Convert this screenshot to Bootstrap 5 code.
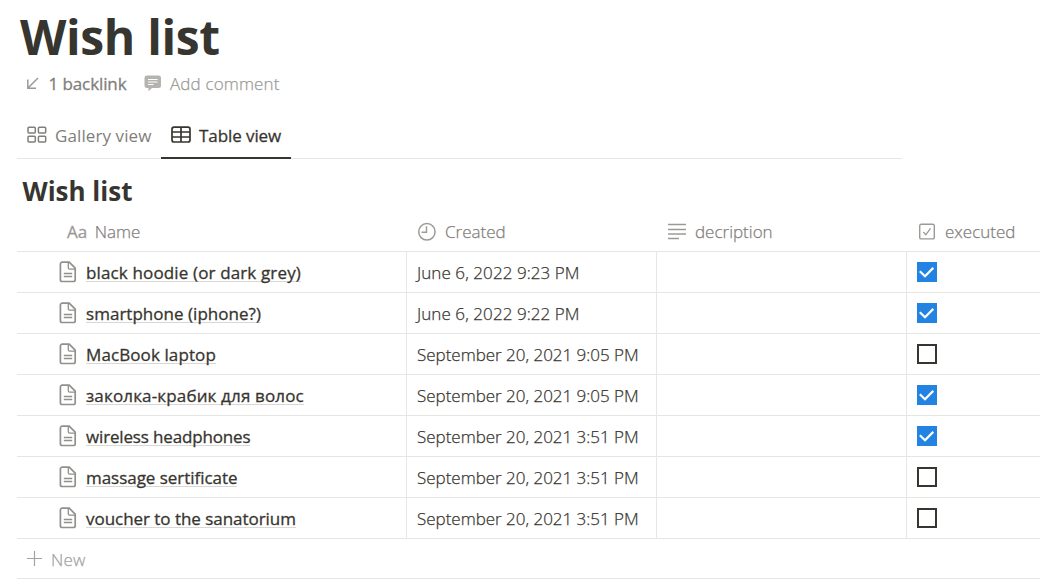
<!DOCTYPE html>
<html lang="en">
<head>
<meta charset="utf-8">
<meta name="viewport" content="width=device-width, initial-scale=1">
<title>Wish list</title>
<link href="https://cdn.jsdelivr.net/npm/bootstrap@5.3.0/dist/css/bootstrap.min.css" rel="stylesheet">
<style>
  body { font-family: "Open Sans", "Noto Sans", sans-serif; font-size: 17px; line-height: 24px; color: #37352f; background: #fff; overflow: hidden; height: 587px; }
  svg { display: block; flex: none; fill: none; stroke: currentColor; }
  .page-title { font-size: 48px; line-height: 60px; font-weight: 700; letter-spacing: -.35px; padding: 7px 0 0 20px; margin: 0; }
  .page-meta { height: 33px; padding-left: 26px; color: #9b9a97; }
  .backlink { margin-left: 9.5px; letter-spacing: -.1px; }
  .bubble { margin-left: 17px; }
  .add-comment { margin-left: 8.5px; letter-spacing: .14px; }
  .ink-soft { color: #7f7e7a; }
  .ink-faint { color: #9b9a97; }
  .medium { font-weight: 500; -webkit-text-stroke: .3px currentColor; }
  .thin { font-weight: 300; -webkit-text-stroke: .25px currentColor; }
  .views { width: 885px; height: 48px; margin: 11px 0 0 17px; border-bottom: 1px solid #e6e6e5; }
  .view-tab { height: 48px; padding: 1px 0 0 10px; border-bottom: 2px solid transparent; white-space: nowrap; }
  .view-tab.active { width: 130px; color: #37352f; border-color: #37352f; }
  .view-gallery { width: 144px; }
  .view-tab span { margin: 2px 0 0 8px; }
  .db-title { font-size: 26px; line-height: 32px; font-weight: 700; padding: 16px 0 0 22.5px; height: 52px; margin: 0; }
  .grid-table { width: 1030px; margin-left: 17px; }
  .grid-row { height: 41px; border-bottom: 1px solid #e6e6e5; white-space: nowrap; }
  .cell { border-right: 1px solid #e6e6e5; height: 40px; }
  .grid-head .cell { border-color: transparent; padding-top: 1px; }
  .grid-head svg { margin-right: 8px; }
  .c-name { width: 390px; padding-left: 43px; }
  .grid-head .c-name { padding-left: 50px; }
  .c-date, .c-desc { width: 250px; padding-left: 10px; }
  .c-date span { padding-top: 1px; }
  .c-done { width: 139px; padding-left: 10px; border-right: 0; }
  .doc { width: 18px; height: 22px; margin: -1px 9px 0 -1px; color: #91908c; }
  .page-link-text { line-height: 22px; height: 20px; margin-top: -1px; border-bottom: 1px solid #d8d7d5; }
  .tick { width: 20px; height: 20px; border: 2px solid #37352f; }
  .tick.on { background: #2383e2; border: 0; color: #fff; }
  .new-row { height: 40px; padding-left: 10px; color: #a3a29f; }
  .new-row svg { margin-right: 9px; }
  .new-row span { padding-top: 2px; letter-spacing: .2px; }
</style>
</head>
<body>
<svg width="0" height="0" class="position-absolute">
  <symbol id="doc" viewBox="0 0 18 22"><path d="M3.200 1.200h7l6 6v11.500a1.800 1.800 0 0 1-1.800 1.800H3.200a1.800 1.800 0 0 1-1.800-1.800V3a1.800 1.800 0 0 1 1.800-1.800z" stroke-width="1.700"/><path d="M9.300 1.500v5.300a1.400 1.400 0 0 0 1.400 1.400H16M4.800 12.500h8.400M4.800 15.500h8.400" stroke-width="1.300"/></symbol>
  <symbol id="check" viewBox="0 0 20 20"><path d="M2.800 9.300l5.200 4.900 8.300-8.300" stroke-width="2.200"/></symbol>
</svg>

<h1 class="page-title">Wish list</h1>
<div class="page-meta d-flex align-items-center">
  <svg width="13" height="13" viewBox="0 0 13 13"><path d="M12 1L2 11M1.800 2.500V11.200H10" stroke-width="1.500"/></svg>
  <span class="medium ink-soft backlink">1 backlink</span>
  <svg class="bubble" width="18" height="17" viewBox="0 0 18 17"><path d="M3 .5h11.500a2.500 2.500 0 0 1 2.500 2.500v7.500a2.500 2.500 0 0 1-2.500 2.500H8l-3.500 3.300V13H3a2.500 2.500 0 0 1-2.500-2.500V3A2.500 2.500 0 0 1 3 .5z" fill="#b4b3b0" stroke="none"/><path d="M4 4.500h9.500M4 7h9.500M4 9.500h5.500" stroke="#fff" stroke-width="1"/></svg>
  <span class="thin add-comment">Add comment</span>
</div>

<nav class="views d-flex">
  <div class="view-tab view-gallery d-flex align-items-center ink-soft">
    <svg width="20" height="18" viewBox="0 0 20 18"><g stroke-width="1.500"><rect x="1" y="1.200" width="7.300" height="5.800" rx="1"/><rect x="11.400" y="1.200" width="7.300" height="5.800" rx="1"/><rect x="1" y="10.200" width="7.300" height="5.800" rx="1"/><rect x="11.400" y="10.200" width="7.300" height="5.800" rx="1"/></g></svg>
    <span style="letter-spacing:.1px">Gallery view</span>
  </div>
  <div class="view-tab active d-flex align-items-center medium">
    <svg width="20" height="18" viewBox="0 0 20 18"><path d="M3 1.200h14a2 2 0 0 1 2 2v10.800a2 2 0 0 1-2 2H3a2 2 0 0 1-2-2V3.200a2 2 0 0 1 2-2zM1 6h18M1 11h18M10 1.500v14.500" stroke-width="1.700"/></svg>
    <span style="letter-spacing:-.08px">Table view</span>
  </div>
</nav>

<h2 class="db-title">Wish list</h2>

<main class="grid-table">
  <div class="grid-row grid-head d-flex ink-soft thin">
    <div class="cell c-name d-flex align-items-center"><span class="medium ink-faint" style="margin-right:7.500px">Aa</span>Name</div>
    <div class="cell c-date d-flex align-items-center">
      <svg class="ink-faint" width="20" height="20" viewBox="0 0 20 20"><circle cx="9.900" cy="9.800" r="8.200" stroke-width="1.500"/><path d="M9.500 4.300v6H4.500" stroke-width="1.400"/></svg>Created</div>
    <div class="cell c-desc d-flex align-items-center">
      <svg class="ink-faint" width="20" height="20" viewBox="0 0 20 20"><path d="M1 2.500h18M1 7.500h18M1 12h18M1 16.500h11" stroke-width="1.300"/></svg>decription</div>
    <div class="cell c-done d-flex align-items-center">
      <svg class="ink-faint" width="20" height="20" viewBox="0 0 20 20"><rect x="2.700" y="2.300" width="14.600" height="14.600" rx="1.500" stroke-width="1.400"/><path d="M6.400 10l2.500 2.800 4.600-6.500" stroke-width="1.300"/></svg>executed</div>
  </div>
  <div id="rows"></div>
  <div class="grid-row new-row d-flex align-items-center thin">
    <svg width="15" height="15" viewBox="0 0 15 15"><path d="M7.500 0v15M0 7.500h15" stroke-width="1.200"/></svg>
    <span>New</span>
  </div>
</main>
<script src="https://cdn.jsdelivr.net/npm/bootstrap@5.3.0/dist/js/bootstrap.bundle.min.js"></script>
<script>
// name, created, executed, tracking of the name and of the date in px
const wishes = [
  ['black hoodie (or dark grey)', 'June 6, 2022 9:23 PM', true, .14, .07],
  ['smartphone (iphone?)', 'June 6, 2022 9:22 PM', true, .03, .07],
  ['MacBook laptop', 'September 20, 2021 9:05 PM', false, .1, -.02],
  ['заколка-крабик для волос', 'September 20, 2021 9:05 PM', true, .15, -.02],
  ['wireless headphones', 'September 20, 2021 3:51 PM', true, -.16, -.02],
  ['massage sertificate', 'September 20, 2021 3:51 PM', false, -.04, -.02],
  ['voucher to the sanatorium', 'September 20, 2021 3:51 PM', false, -.04, -.02]
];
document.getElementById('rows').innerHTML = wishes.map(([name, date, done, track, dateTrack]) => `
  <div class="grid-row d-flex">
    <div class="cell c-name d-flex align-items-center"><svg class="doc"><use href="#doc"/></svg><span class="page-link-text medium" style="letter-spacing:${track}px">${name}</span></div>
    <div class="cell c-date d-flex align-items-center thin"><span style="letter-spacing:${dateTrack}px">${date}</span></div>
    <div class="cell c-desc"></div>
    <div class="cell c-done d-flex align-items-center"><div class="tick ${done ? 'on' : ''}">${done ? '<svg width="20" height="20"><use href="#check"/></svg>' : ''}</div></div>
  </div>`).join('');
</script>
</body>
</html>
